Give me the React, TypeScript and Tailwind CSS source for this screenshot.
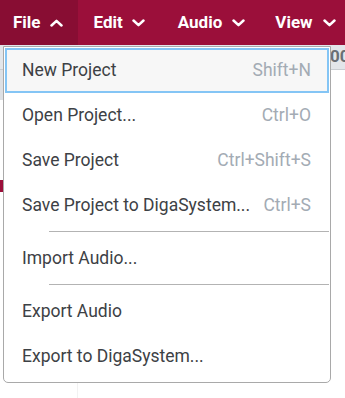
import React from "react";

function Chevron({ up }: { up?: boolean }) {
  return (
    <svg width="13" height="8" viewBox="0 0 13 8" fill="none" className="shrink-0">
      {up ? (
        <path d="M1.5 6.5 L6.5 1.8 L11.5 6.5" stroke="white" strokeWidth="2.5" strokeLinecap="round" strokeLinejoin="round" />
      ) : (
        <path d="M1.5 1.5 L6.5 6.2 L11.5 1.5" stroke="white" strokeWidth="2.5" strokeLinecap="round" strokeLinejoin="round" />
      )}
    </svg>
  );
}

type Item = { label: string; shortcut?: string } | "sep";

const items: Item[] = [
  { label: "New Project", shortcut: "Shift+N" },
  { label: "Open Project...", shortcut: "Ctrl+O" },
  { label: "Save Project", shortcut: "Ctrl+Shift+S" },
  { label: "Save Project to DigaSystem...", shortcut: "Ctrl+S" },
  "sep",
  { label: "Import Audio..." },
  "sep",
  { label: "Export Audio" },
  { label: "Export to DigaSystem..." },
];

export default function App() {
  return (
    <div
      className="relative w-[345px] h-[398px] overflow-hidden bg-white"
      style={{ fontFamily: "Roboto, 'Liberation Sans', sans-serif" }}
    >
      {/* Top menu bar */}
      <div className="flex h-[45px] bg-[#9b0f3a] text-white font-bold text-[17px] whitespace-nowrap">
        <div className="flex items-center gap-[9px] pl-[13px] pr-[15px] bg-[#880d33]">
          <span>File</span>
          <Chevron up />
        </div>
        <div className="flex items-center gap-[9px] pl-[16px] pr-[16px]">
          <span>Edit</span>
          <Chevron />
        </div>
        <div className="flex items-center gap-[10px] pl-[17px] pr-[15px]">
          <span>Audio</span>
          <Chevron />
        </div>
        <div className="flex items-center gap-[10px] px-[15px]">
          <span>View</span>
          <Chevron />
        </div>
      </div>

      {/* Background app content */}
      <div className="flex h-[25px] bg-[#e3e6ea] border-b border-[#c9cdd2] items-center whitespace-nowrap overflow-hidden">
        <div className="w-[3px] h-[10px] bg-[#b4b6b9] self-end mb-[-1px]" />
        <span className="ml-[330px] text-[17px] font-bold text-[#6a6f75]">00</span>
      </div>
      <div className="flex">
        <div className="flex flex-col w-[78px] border-r border-[#f2f2f2] h-[330px]">
          <div className="w-[3px] h-[30px] bg-[#dde0e4]" />
          <div className="w-[3px] h-[80px]" />
          <div className="w-[3px] h-[12px] bg-[#9b0f3a]" />
        </div>
      </div>

      {/* Dropdown menu */}
      <div className="absolute left-[3px] top-[46px] w-[328px] bg-white border border-[#a9a9a9] rounded-b-[5px] p-[1px] pb-[3px] text-[17.5px] whitespace-nowrap">
        {items.map((it, i) =>
          it === "sep" ? (
            <div key={i} className="ml-[44px] mt-[3px] mb-[4px] h-px bg-[#b3b3b3]" />
          ) : (
            <div
              key={i}
              className={
                "flex items-center justify-between h-[45px] border-2 pl-[15px] pr-[16px] " +
                (i === 0 ? "border-[#84c5f5] bg-[#f7f7f7]" : "border-transparent")
              }
            >
              <span className="text-[#3d4145]">{it.label}</span>
              {it.shortcut && <span className="text-[#a3abb4]">{it.shortcut}</span>}
            </div>
          )
        )}
      </div>
    </div>
  );
}
